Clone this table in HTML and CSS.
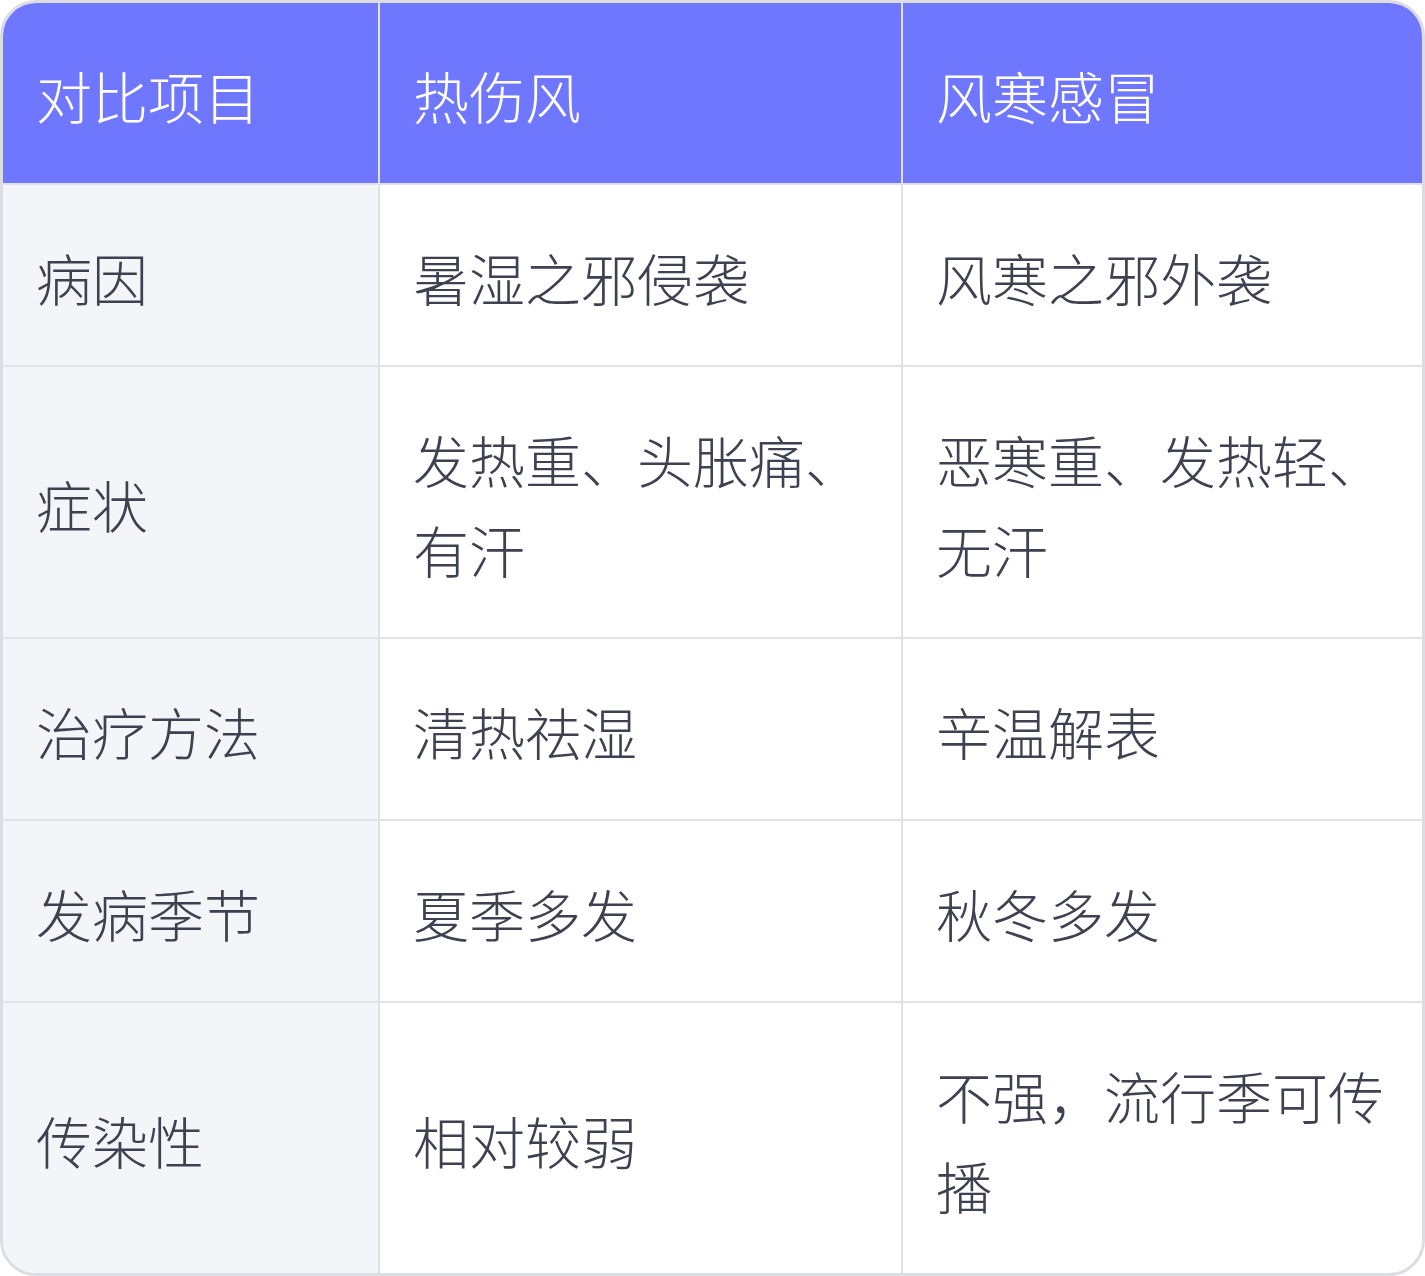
FILE: index.html
```html
<!DOCTYPE html>
<html lang="zh-CN">
<head>
<meta charset="utf-8">
<link rel="stylesheet" href="styles.css">
</head>
<body>
<div class="wrap">
<table class="cmp">
<thead>
<tr><th class="c1">对比项目</th><th class="c2">热伤风</th><th class="c3">风寒感冒</th></tr>
</thead>
<tbody>
<tr><td class="c1">病因</td><td>暑湿之邪侵袭</td><td>风寒之邪外袭</td></tr>
<tr><td class="c1">症状</td><td>发热重、头胀痛、有汗</td><td>恶寒重、发热轻、无汗</td></tr>
<tr><td class="c1">治疗方法</td><td>清热祛湿</td><td>辛温解表</td></tr>
<tr><td class="c1">发病季节</td><td>夏季多发</td><td>秋冬多发</td></tr>
<tr><td class="c1">传染性</td><td>相对较弱</td><td>不强，流行季可传播</td></tr>
</tbody>
</table>
</div>
</body>
</html>
```
FILE: styles.css
```css
html, body { margin: 0; padding: 0; background: #ffffff; }
.wrap {
  width: 1425px;
  height: 1276px;
  box-sizing: border-box;
  border: 3px solid #dcdde2;
  border-radius: 36px;
  overflow: hidden;
}
.cmp {
  width: 100%;
  border-collapse: collapse;
  table-layout: fixed;
  font-family: "Noto Sans CJK SC", "Noto Sans", sans-serif;
  font-size: 56px;
  font-weight: 300;
  line-height: 90px;
  color: #3d4150;
}
.cmp th, .cmp td {
  padding: 47px 33px 43px;
  text-align: left;
  vertical-align: middle;
  border: 2px solid #e1e2e6;
}
.cmp tr > :first-child { border-left: none; }
.cmp tr > :last-child { border-right: none; }
.cmp thead th { border-top: none; }
.cmp tbody tr:last-child td { border-bottom: none; }
.cmp th {
  background: #7077ff;
  color: #ffffff;
  font-weight: 300;
}
.cmp th.c1 { width: 309px; }
.cmp td.c1 { background: #f4f5f9; }
.cmp th.c2 { width: 455px; }
```
